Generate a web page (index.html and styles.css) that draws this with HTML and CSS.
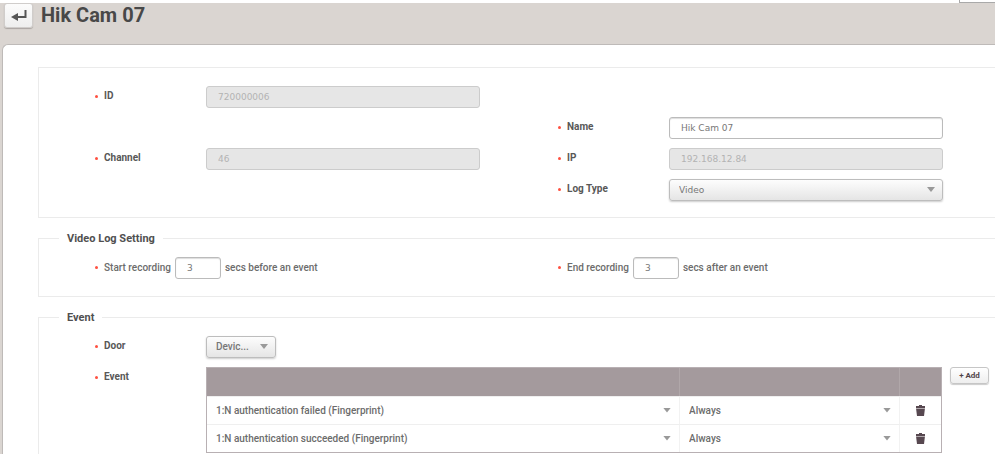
FILE: index.html
```html
<!DOCTYPE html>
<html lang="en">
<head>
<meta charset="utf-8">
<title>Hik Cam 07</title>
<link rel="stylesheet" href="styles.css">
</head>
<body>
<div class="corner-box"></div>
<header class="header">
  <button class="back" type="button" aria-label="Back">
    <svg width="16" height="12" viewBox="0 0 16 12"><path d="M14.5 0V7H5" fill="none" stroke="#555" stroke-width="2"/><path d="M0 7L7 3V11Z" fill="#555"/></svg>
  </button>
  <h1 class="title">Hik Cam 07</h1>
</header>
<main class="panel">
  <form>
    <fieldset class="group group-info">
      <div class="columns">
        <div class="field"><label class="label" for="id">ID</label><input class="input" id="id" value="720000006" disabled></div>
        <div class="field field-name"><label class="label" for="name">Name</label><input class="input" id="name" value="Hik Cam 07"></div>
        <div class="field field-channel"><label class="label" for="channel">Channel</label><input class="input" id="channel" value="46" disabled></div>
        <div class="field field-ip"><label class="label" for="ip">IP</label><input class="input" id="ip" value="192.168.12.84" disabled></div>
        <div class="field field-log"><label class="label" for="log">Log Type</label><span class="drop"><select class="select select-wide" id="log"><option>Video</option></select></span></div>
      </div>
    </fieldset>
    <fieldset class="group">
      <legend class="legend">Video Log Setting</legend>
      <div class="columns">
        <div class="inline"><label class="label label-plain" for="before">Start recording</label><input class="input input-short" id="before" value="3"><span>secs before an event</span></div>
        <div class="inline"><label class="label label-plain" for="after">End recording</label><input class="input input-short" id="after" value="3"><span>secs after an event</span></div>
      </div>
    </fieldset>
    <fieldset class="group group-event">
      <legend class="legend">Event</legend>
      <div class="stack">
        <div class="field"><label class="label" for="door">Door</label><span class="drop drop-door"><select class="select" id="door"><option>Devic...</option></select></span></div>
        <div class="field">
          <span class="label" id="event-label">Event</span>
          <div class="events">
            <table class="table" aria-labelledby="event-label">
              <colgroup><col><col class="col-time"><col class="col-action"></colgroup>
              <thead><tr><th></th><th></th><th></th></tr></thead>
              <tbody>
                <tr>
                  <td><span class="drop"><select class="cell-select" aria-label="Event 1"><option>1:N authentication failed (Fingerprint)</option></select></span></td>
                  <td><span class="drop"><select class="cell-select" aria-label="Schedule 1"><option>Always</option></select></span></td>
                  <td><button class="trash" type="button" aria-label="Delete event 1"><svg width="9" height="11" viewBox="0 0 9 11" fill="#574850"><path d="M3 0H6V1H9V3H0V1H3Z"/><path d="M0 3H9L8 11H1Z"/><path d="M0 3H9V4H0Z" fill="#b0a8ac"/></svg></button></td>
                </tr>
                <tr>
                  <td><span class="drop"><select class="cell-select" aria-label="Event 2"><option>1:N authentication succeeded (Fingerprint)</option></select></span></td>
                  <td><span class="drop"><select class="cell-select" aria-label="Schedule 2"><option>Always</option></select></span></td>
                  <td><button class="trash" type="button" aria-label="Delete event 2"><svg width="9" height="11" viewBox="0 0 9 11" fill="#574850"><path d="M3 0H6V1H9V3H0V1H3Z"/><path d="M0 3H9L8 11H1Z"/><path d="M0 3H9V4H0Z" fill="#b0a8ac"/></svg></button></td>
                </tr>
              </tbody>
            </table>
            <button class="add" type="button">+ Add</button>
          </div>
        </div>
      </div>
    </fieldset>
  </form>
</main>
</body>
</html>
```
FILE: styles.css
```css
* { box-sizing: border-box; }

body {
  margin: 0;
  border-top: 3px solid #fff;
  background: #dad5d1;
  color: #6c6c6c;
  font: 500 10px/12px Roboto, "Liberation Sans", sans-serif;
}

button, input, select { margin: 0; font: inherit; color: inherit; }

.corner-box {
  position: absolute;
  top: 0;
  right: 0;
  width: 36px;
  height: 3px;
  border-left: 1px solid #a9a9a9;
  border-bottom: 1px solid #a9a9a9;
  background: #fff;
}

.header { display: flex; gap: 8px; height: 41px; padding-left: 4px; }

.back {
  display: flex;
  align-items: center;
  justify-content: center;
  width: 29px;
  height: 25px;
  padding: 0;
  border: 1px solid #d0cdcb;
  border-radius: 3px;
  background: linear-gradient(#fcfcfc, #eee);
  box-shadow: 0 1px 1px #aaa5a2;
}

.title { margin: 0; color: #484848; font-size: 20px; line-height: 25px; font-weight: 700; }

.panel {
  margin-left: 2px;
  min-height: calc(100vh - 44px);
  padding: 22px 0 0 35px;
  border-top: 1px solid #bebab8;
  border-left: 1px solid #bebab8;
  border-radius: 6px 0 0 0;
  background: #fff;
}

.group {
  min-width: 0;
  margin: 14px 0 0;
  padding: 12px 52px 17px 56px;
  border: 1px solid #ebebeb;
  border-right: 0;
}

.group-info { margin-top: 0; padding-top: 18px; padding-bottom: 16px; }

.group-event { padding-right: 6px; padding-bottom: 1px; border-bottom: 0; }

.legend { margin-left: -36px; padding: 0 8px; color: #505050; font-size: 11px; line-height: 13px; font-weight: 700; }

.columns { display: grid; grid-template-columns: 1fr 1fr; gap: 9px 78px; }

.field { display: grid; grid-template-columns: 111px 1fr; }

.field-name { grid-area: 2 / 2; }
.field-channel { grid-area: 3 / 1; }
.field-ip { grid-area: 3 / 2; }
.field-log { grid-area: 4 / 2; }

.label { position: relative; padding: 4px 0 0 9px; color: #585858; font-weight: 700; }

.label::before {
  content: "";
  position: absolute;
  top: 9px;
  left: 0;
  width: 3px;
  height: 3px;
  border-radius: 50%;
  background: #ff5040;
}

.label-plain { padding: 5px 0 5px 9px; color: inherit; font-weight: 500; }

.input {
  width: 100%;
  height: 22px;
  padding: 0 11px;
  border: 1px solid #bbb;
  border-radius: 3px;
  background: #fff;
  box-shadow: inset 0 1px 1px #ddd;
  color: #777;
  font: 9px/12px "DejaVu Sans", sans-serif;
}

.input:disabled { border-color: #ccc; background: #e6e6e6; box-shadow: none; color: #b3b3b3; }

.input-short { width: 46px; }

.inline { display: flex; align-items: center; gap: 4px; }

.stack { display: grid; gap: 9px; }

.drop { position: relative; display: block; }

.drop::after {
  content: "";
  position: absolute;
  top: calc(50% - 3px);
  right: 8px;
  width: 8px;
  height: 5px;
  background: #999;
  clip-path: polygon(0 0, 100% 0, 50% 100%);
  pointer-events: none;
}

.drop-door { width: 70px; }

.select, .cell-select { display: block; width: 100%; appearance: none; border-radius: 3px; }

.select {
  height: 22px;
  padding: 0 9px;
  border: 1px solid #bdbdbd;
  background: linear-gradient(#fdfdfd, #e5e5e5);
  box-shadow: 0 1px 2px #ccc;
  color: #777;
}

.select-wide { font: 9px/12px "DejaVu Sans", sans-serif; }

.cell-select { height: 27px; padding: 0 9px; border: 0; background: transparent; }

.events { display: flex; align-items: flex-start; gap: 8px; }

.table {
  flex: 1;
  width: 0;
  table-layout: fixed;
  border: 1px solid #b8b0b3;
  border-spacing: 0;
}

.col-time { width: 220px; }
.col-action { width: 42px; }

th, td { padding: 0; border-left: 1px solid #f2f2f2; }

th:first-child, td:first-child { border-left: 0; }

th { height: 28px; border-color: #b0a7a9; background: #a49a9d; }

td { height: 28px; border-top: 1px solid #efefef; text-align: center; }

.trash { display: flex; align-items: center; justify-content: center; width: 100%; height: 27px; padding: 0; border: 0; background: transparent; }

.add {
  width: 39px;
  height: 17px;
  padding: 0;
  border: 1px solid #c6c6c6;
  border-radius: 3px;
  background: linear-gradient(#fff, #eee);
  box-shadow: 0 1px 1px #ccc;
  color: #514449;
  font-size: 8px;
  line-height: 10px;
  font-weight: 700;
}
```
